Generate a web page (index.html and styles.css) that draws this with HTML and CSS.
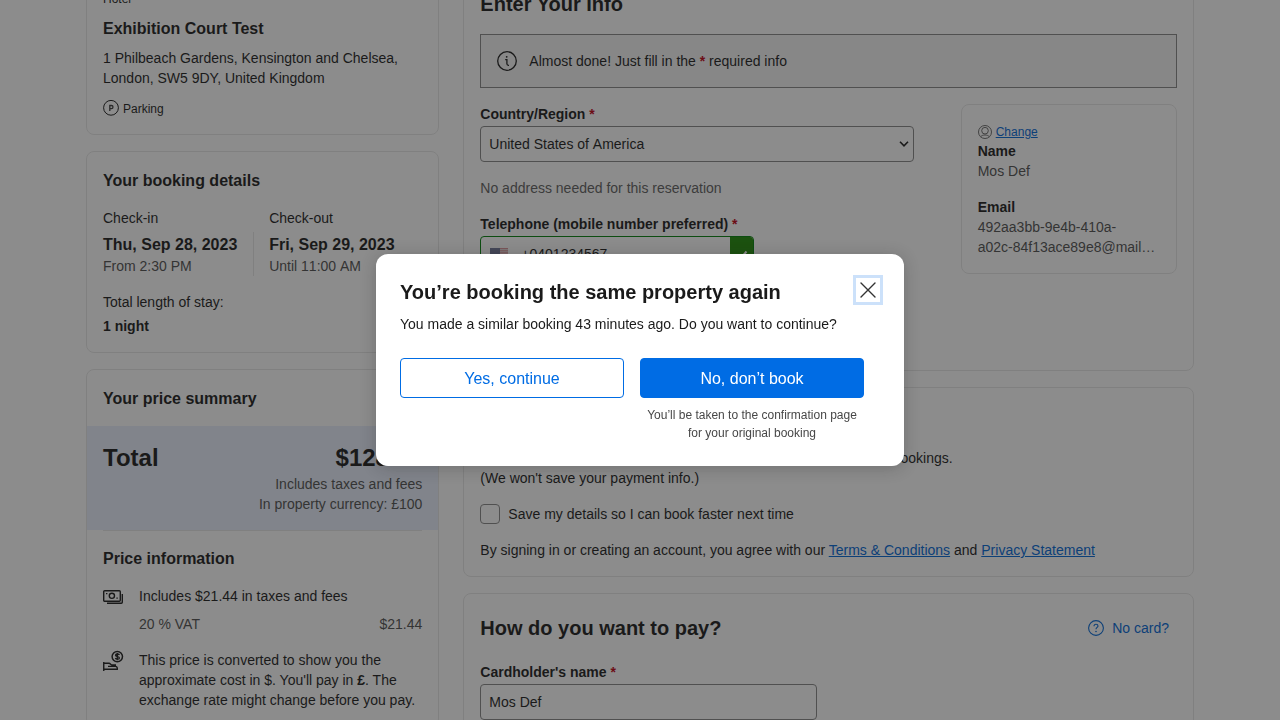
FILE: index.html
```html
<!DOCTYPE html>
<html lang="en">
<head>
<meta charset="utf-8">
<title>Enter your info</title>
<link rel="stylesheet" href="styles.css">
</head>
<body>
<div class="page">
  <aside class="column">
    <section class="card">
      <div class="small">Hotel</div>
      <h3 class="heading hotel-name">Exhibition Court Test</h3>
      <div class="address">1 Philbeach Gardens, Kensington and Chelsea,<br>London, SW5 9DY, United Kingdom</div>
      <div class="parking small">
        <svg width="16" height="16" viewBox="0 0 16 16" fill="none" stroke="currentColor"><circle cx="8" cy="7.8" r="7.4"/><path d="M6.800 10.900V5.500h1.600a1.600 1.600 0 0 1 0 3.200H6.800" stroke-width="1.300" stroke="#3d3d3d"/></svg>
        <span>Parking</span>
      </div>
    </section>
    <section class="card">
      <h3 class="heading">Your booking details</h3>
      <div class="dates-labels"><div>Check-in</div><div>Check-out</div></div>
      <div class="dates">
        <div class="date"><strong class="heading">Thu, Sep 28, 2023</strong><div class="muted">From 2:30 PM</div></div>
        <div class="date date-out"><strong class="heading">Fri, Sep 29, 2023</strong><div class="muted until">Until 11:00 AM</div></div>
      </div>
      <div class="stay">Total length of stay:</div>
      <strong class="nights">1 night</strong>
    </section>
    <section class="card price-card">
      <h3 class="heading price-title">Your price summary</h3>
      <div class="total">
        <div class="total-row"><span>Total</span><span>$128.64</span></div>
        <div class="muted">Includes taxes and fees</div>
        <div class="muted">In property currency: £100</div>
      </div>
      <div class="price-info">
        <h3 class="heading">Price information</h3>
        <div class="info-row">
          <svg width="21" height="20" viewBox="0 0 21 20" fill="none" stroke="currentColor" stroke-width="1.400"><rect x=".7" y="4.700" width="16.600" height="10.600" rx="1"/><circle cx="8.900" cy="9.800" r="2.600"/><path d="M4 17.300h14.300a1 1 0 0 0 1-1V8"/><path d="M3 7.600h1.400M13.400 12.100h1.400" stroke-width="1.400"/></svg>
          <div class="info-text">Includes $21.44 in taxes and fees
            <div class="vat muted"><span>20 % VAT</span><span>$21.44</span></div>
          </div>
        </div>
        <div class="info-row">
          <svg width="21" height="22" viewBox="0 0 21 22" fill="none" stroke="currentColor" stroke-width="1.500"><circle cx="14.300" cy="6.600" r="5.200"/><path d="M16.400 5c-.3-.7-1-1-2-1-1.200 0-1.900.5-1.900 1.300 0 1.700 3.900.9 3.900 2.600 0 .8-.9 1.300-2 1.300-1 0-1.800-.4-2.100-1.200M14.300 3v7.200" stroke-width="1.300"/><path d="M.75 12v9M.75 13.300H6c1.400 0 1.800 1.700 3 1.700h4M5 16.400h7.600c1 0 2 1 1.700 2.900H.75" stroke-width="1.400"/></svg>
          <div class="info-text">This price is converted to show you the approximate cost in $. You'll pay in <strong>£</strong>. The exchange rate might change before you pay.</div>
        </div>
      </div>
    </section>
  </aside>

  <main class="column">
    <section class="card info-card">
      <h2 class="title">Enter Your Info</h2>
      <div class="notice">
        <svg width="20" height="20" viewBox="0 0 20 20" fill="none" stroke="currentColor" stroke-width="1.300"><circle cx="10" cy="10" r="9.300"/><path d="M8.200 8.700h1.700v4.100c0 1 .4 1.500 1.600 1.500h.5"/><circle cx="9.700" cy="5.800" r=".9" fill="currentColor" stroke="none"/></svg>
        <span>Almost done! Just fill in the <b class="star">*</b> required info</span>
      </div>
      <div class="form-row">
        <div class="form">
          <div class="label">Country/Region <span class="star">*</span></div>
          <div class="field select"><span>United States of America</span>
            <svg width="10" height="8" viewBox="0 0 10 8" fill="none" stroke="#1a1a1a" stroke-width="1.600"><path d="M1 1.800l4 4 4-4"/></svg>
          </div>
          <div class="hint">No address needed for this reservation</div>
          <div class="label">Telephone (mobile number preferred) <span class="star">*</span></div>
          <div class="field phone">
            <svg class="flag" width="18" height="14" viewBox="0 0 18 14"><path fill="#e3d5d8" d="M0 0h18v14H0z"/><path stroke="#dc9298" stroke-width="1.100" d="M0 .5h18M0 2.700h18M0 4.900h18M0 7.100h18M0 9.300h18M0 11.500h18M0 13.600h18"/><path fill="#6f7596" d="M0 0h10v7.500H0z"/></svg>
            <span class="number">+0401234567</span>
            <span class="valid"><svg width="12" height="12" viewBox="0 0 12 12" fill="none" stroke="#fff" stroke-width="2"><path d="M1.500 7.500l3 3L10.500 3.500"/></svg></span>
          </div>
        </div>
        <div class="user">
          <div class="change">
            <svg width="14" height="14" viewBox="0 0 14 14" fill="none" stroke="currentColor" stroke-width=".9"><circle cx="7" cy="7" r="6.500"/><circle cx="7" cy="5.700" r="3.300"/><path d="M2.700 11.800c1.200-1.500 2.600-1.800 4.300-1.800s3.100.3 4.300 1.800"/></svg>
            <a class="link small">Change</a>
          </div>
          <strong>Name</strong>
          <div class="muted">Mos Def</div>
          <strong class="email">Email</strong>
          <div class="muted">492aa3bb-9e4b-410a-<br>a02c-84f13ace89e8@mail…</div>
        </div>
      </div>
    </section>

    <section class="card save-card">
      <div class="save-line">bookings.</div>
      <div>(We won't save your payment info.)</div>
      <div class="check-row"><span class="checkbox"></span><span>Save my details so I can book faster next time</span></div>
      <div>By signing in or creating an account, you agree with our <a class="link">Terms &amp; Conditions</a> and <a class="link">Privacy Statement</a></div>
    </section>

    <section class="card pay-card">
      <div class="pay-head">
        <h2 class="title">How do you want to pay?</h2>
        <div class="no-card">
          <svg width="16" height="16" viewBox="0 0 16 16" fill="none" stroke="currentColor" stroke-width="1.100"><circle cx="8" cy="8" r="7.400"/><path d="M6 6.200c0-1.200.8-2 2-2s2 .8 2 1.800c0 1.400-2 1.400-2 3.200"/><circle cx="8" cy="11.500" r=".8" fill="currentColor" stroke="none"/></svg>
          <span>No card?</span>
        </div>
      </div>
      <div class="label">Cardholder's name <span class="star">*</span></div>
      <div class="field cardholder">Mos Def</div>
    </section>
  </main>
</div>

<div class="overlay">
  <div class="modal" role="dialog">
    <div class="modal-body">
      <h2 class="title">You’re booking the same property again</h2>
      <div class="modal-text">You made a similar booking 43 minutes ago. Do you want to continue?</div>
      <div class="actions">
        <div class="button secondary">Yes, continue</div>
        <div>
          <div class="button primary">No, don’t book</div>
          <div class="caption small">You’ll be taken to the confirmation page for your original booking</div>
        </div>
      </div>
    </div>
    <div class="close">
      <svg width="24" height="24" viewBox="0 0 24 24" fill="none" stroke="#333" stroke-width="1.400" stroke-linecap="round"><path d="M5 5l14 14M19 5L5 19"/></svg>
    </div>
  </div>
</div>
</body>
</html>
```
FILE: styles.css
```css
* { box-sizing: border-box; }
html, body { height: 100%; }
body {
  margin: 0;
  overflow: hidden;
  background: #fff;
  color: #1a1a1a;
  font: 14px/20px "Liberation Sans", Arial, sans-serif;
}
svg { display: block; flex: none; }
h2, h3 { margin: 0; }
.page {
  display: grid;
  grid-template-columns: 353.33px 730.67px;
  gap: 24px;
  width: 1108px;
  height: 747px;
  margin: -27px auto 0;
  overflow: hidden;
}
.column { display: flex; flex-direction: column; gap: 16px; }
.card { border: 1px solid #e7e7e7; border-radius: 8px; padding: 16px; }
.small { font-size: 12px; line-height: 18px; }
.heading { height: 24px; padding-top: 1px; font-size: 16px; line-height: 24px; font-weight: 700; }
.title { font-size: 20px; line-height: 28px; font-weight: 700; }
.muted { color: #4f4f4f; }
.star { color: #c00012; }
.link { color: #0066d6; text-decoration: underline; }

.hotel-name { margin: 8px 0; }
.parking { display: flex; gap: 4px; margin-top: 12px; }

.dates-labels, .dates { display: grid; grid-template-columns: 150.17px 1fr; }
.dates-labels { column-gap: 16px; margin: 16px 0 4px; }
.date-out { border-left: 1px solid #e7e7e7; padding-left: 15px; }
.date .heading { display: block; }
.until { font-kerning: none; }
.stay { margin: 16px 0 4px; }
.nights { display: block; }

.price-card { padding: 16px 0; }
.price-title { padding: 1px 16px 0; }
.total { margin-top: 16px; padding: 16px; background: #e9effc; text-align: right; }
.total-row {
  display: flex;
  justify-content: space-between;
  font-size: 24px;
  line-height: 32px;
  font-weight: 700;
}
.price-info { margin: 0 16px; padding-top: 15px; border-top: 1px solid #e7e7e7; }
.info-row { display: flex; gap: 15px; margin-top: 16px; }
.info-text { flex: 1; }
.vat { display: flex; justify-content: space-between; margin-top: 8px; }

.notice {
  display: flex;
  align-items: center;
  gap: 12px;
  height: 54px;
  margin: 16px 0;
  padding: 0 16px;
  border: 1px solid #868686;
  background: #f5f5f5;
}
.info-card { height: 398px; }
.form-row { display: flex; justify-content: space-between; align-items: flex-start; }
.form { width: 434px; }
.label { font-weight: 700; }
.field {
  display: flex;
  align-items: center;
  height: 36px;
  margin-top: 2px;
  padding: 0 8px;
  border: 1px solid #868686;
  border-radius: 4px;
}
.select { justify-content: space-between; padding-right: 4px; font-kerning: none; }
.hint { margin: 16px 0; color: #5e5e5e; }
.phone { width: 274px; padding: 0 0 0 9px; border-color: #008009; overflow: hidden; }
.flag { margin-top: 1px; }
.number { flex: 1; padding-left: 13px; }
.valid {
  display: flex;
  align-items: center;
  justify-content: center;
  width: 24px;
  height: 36px;
  margin-right: -1px;
  background: #1f8a06;
}
.user { width: 216.3px; padding: 16px; border: 1px solid #e7e7e7; border-radius: 8px; }
.user strong { display: block; }
.change { display: flex; align-items: center; gap: 4px; height: 20px; padding-top: 2px; color: #595959; }
.email { margin-top: 16px; }

.save-card { padding-top: 60px; }
.save-line { width: 472.3px; text-align: right; }
.check-row { display: flex; gap: 8px; margin: 16px 0; }
.checkbox { width: 20px; height: 20px; border: 1px solid #868686; border-radius: 4px; }

.pay-card { height: 200px; }
.pay-head { display: flex; justify-content: space-between; align-items: center; height: 36px; margin-bottom: 16px; }
.no-card { display: flex; align-items: center; gap: 8px; padding-right: 8px; color: #0066d6; }
.cardholder { width: 337px; }

.overlay {
  position: fixed;
  inset: 0;
  display: flex;
  align-items: center;
  justify-content: center;
  background: rgba(26, 26, 26, .5);
}
.modal {
  display: flex;
  justify-content: space-between;
  width: 528px;
  height: 212px;
  padding: 24px;
  border-radius: 12px;
  background: #fff;
  box-shadow: 0 2px 16px rgba(26, 26, 26, .24);
}
.modal-body { width: 448px; }
.modal-text { margin-top: 8px; }
.actions { display: grid; grid-template-columns: 224px 224px; gap: 16px; width: 464px; margin-top: 24px; }
.button {
  display: flex;
  align-items: center;
  justify-content: center;
  height: 40px;
  padding-top: 2px;
  border: 1px solid #006ce4;
  border-radius: 4px;
  font-size: 16px;
}
.secondary { color: #006ce4; }
.primary { background: #006ce4; color: #fff; }
.caption { margin-top: 8px; text-align: center; color: #474747; }
.close { width: 24px; height: 24px; box-shadow: 0 0 0 3px #cce1fa; }
```
